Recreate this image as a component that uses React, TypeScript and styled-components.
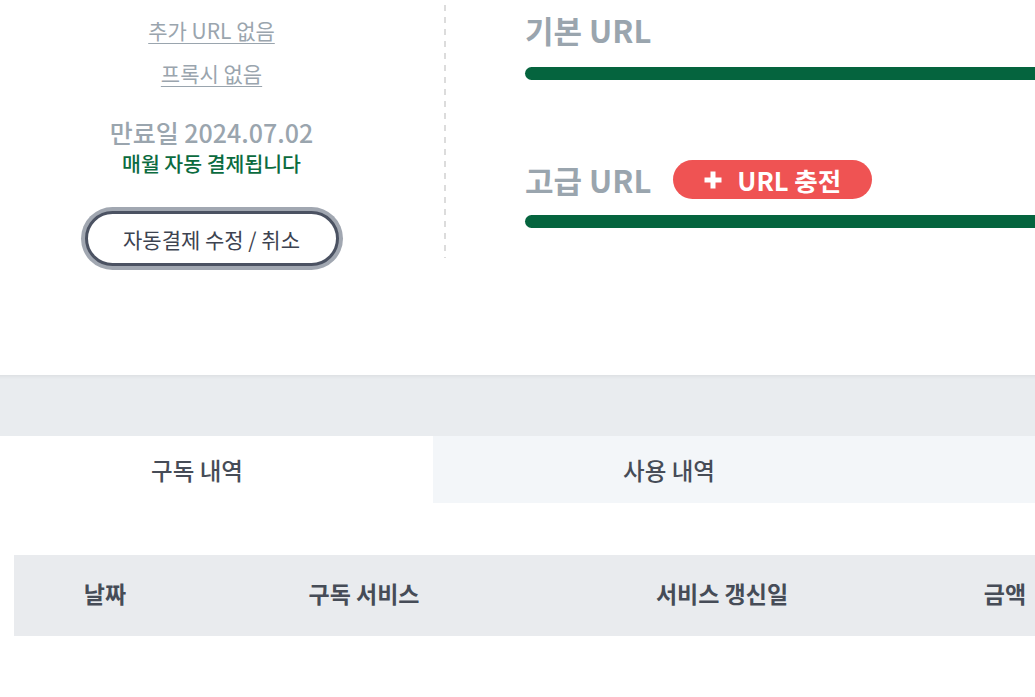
import React from 'react';
import styled, { createGlobalStyle } from 'styled-components';

const GlobalStyle = createGlobalStyle`
  html, body {
    margin: 0;
    padding: 0;
    background: #fff;
    overflow: hidden;
  }
  body {
    font-family: "Noto Sans CJK KR", "Noto Sans", sans-serif;
    color: #464c57;
  }
`;

// the screenshot is a crop of a wider page, shifted left a little
const Page = styled.div`
  margin-left: -39px;
  width: 1640px;
`;

const Summary = styled.section`
  display: flex;
  align-items: flex-start;
  height: 375px;
  padding: 5px 0 0 18px;
  box-sizing: border-box;
`;

const PlanCol = styled.div`
  width: 465px;
  display: flex;
  flex-direction: column;
  align-items: center;
`;

const Divider = styled.div`
  width: 2px;
  height: 253px;
  flex-shrink: 0;
  background: repeating-linear-gradient(
    to bottom,
    #dcdcdc 0,
    #dcdcdc 6px,
    transparent 6px,
    transparent 12px
  );
`;

const PlainLink = styled.a<{ $top: number }>`
  margin-top: ${(p) => p.$top}px;
  font-size: 21px;
  line-height: 30px;
  color: #9aa5ae;
  text-decoration: underline;
  text-underline-offset: 4px;
  text-decoration-thickness: 1px;
  cursor: pointer;
`;

const Expire = styled.div`
  margin-top: 29px;
  font-size: 25px;
  line-height: 30px;
  font-weight: 500;
  color: #9aa5ae;
`;

const AutoPay = styled.div`
  margin-top: 3px;
  font-size: 20.5px;
  line-height: 26px;
  font-weight: 500;
  color: #0b6b3f;
`;

const OutlineButton = styled.button`
  margin-top: 35px;
  width: 254px;
  height: 55px;
  border: 3px solid #4b5262;
  border-radius: 30px;
  box-shadow: 0 0 0 4px #a1a7b1;
  background: #fff;
  font-family: inherit;
  font-size: 21px;
  color: #3d4350;
  cursor: pointer;
`;

const UsageCol = styled.div`
  flex: 1;
  padding-left: 79px;
  margin-top: 5px;
`;

const UsageHead = styled.div<{ $top: number }>`
  display: flex;
  align-items: center;
  gap: 22px;
  margin-top: ${(p) => p.$top}px;
  height: ${(p) => (p.$top ? 39 : 40)}px;
`;

const UsageTitle = styled.h3`
  margin: 0;
  font-size: 31px;
  line-height: 40px;
  font-weight: 700;
  color: #9aa5ae;
`;

const ChargeButton = styled.button`
  display: flex;
  align-items: center;
  gap: 15px;
  height: 39px;
  padding: 0 31px;
  border: none;
  border-radius: 20px;
  background: #ef5353;
  color: #fff;
  font-family: inherit;
  font-size: 25.5px;
  font-weight: 700;
  cursor: pointer;
`;

const Bar = styled.div<{ $top: number }>`
  margin-top: ${(p) => p.$top}px;
  height: 13px;
  border-radius: 7px;
  background: #05643e;
`;

const Band = styled.div`
  height: 61px;
  background: #e9ecef;
  box-shadow: inset 0 3px 4px -2px rgba(0, 0, 0, 0.07);
`;

const Tabs = styled.div`
  display: grid;
  grid-template-columns: repeat(3, 472px);
`;

const Tab = styled.button<{ $active?: boolean }>`
  height: 67px;
  border: none;
  background: ${(p) => (p.$active ? '#fff' : '#f3f6f9')};
  font-family: inherit;
  font-size: 23.5px;
  font-weight: 500;
  color: #464c57;
  cursor: pointer;
`;

const TableWrap = styled.div`
  padding: 52px 0 0 53px;
`;

const HeadRow = styled.div`
  display: grid;
  grid-template-columns: 182px 336px 380px 186px 1fr;
  height: 81px;
  padding-bottom: 5px;
  box-sizing: border-box;
  align-items: center;
  background: #e9ebee;
`;

const HeadCell = styled.div`
  text-align: center;
  font-size: 23px;
  font-weight: 700;
  color: #464c57;
`;

const PlusIcon = () => (
  <svg width="18" height="18" viewBox="0 0 18 18">
    <path d="M9 0.5v17M0.5 9h17" stroke="#fff" strokeWidth="5" />
  </svg>
);

const App = () => {
  return (
    <>
      <GlobalStyle />
      <Page>
        <Summary>
          <PlanCol>
            <PlainLink $top={10}>추가 URL 없음</PlainLink>
            <PlainLink $top={13}>프록시 없음</PlainLink>
            <Expire>만료일 2024.07.02</Expire>
            <AutoPay>매월 자동 결제됩니다</AutoPay>
            <OutlineButton>자동결제 수정 / 취소</OutlineButton>
          </PlanCol>
          <Divider />
          <UsageCol>
            <UsageHead $top={0}>
              <UsageTitle>기본 URL</UsageTitle>
            </UsageHead>
            <Bar $top={17} />
            <UsageHead $top={80}>
              <UsageTitle>고급 URL</UsageTitle>
              <ChargeButton>
                <PlusIcon />
                URL 충전
              </ChargeButton>
            </UsageHead>
            <Bar $top={16} />
          </UsageCol>
        </Summary>
        <Band />
        <Tabs>
          <Tab $active>구독 내역</Tab>
          <Tab>사용 내역</Tab>
          <Tab />
        </Tabs>
        <TableWrap>
          <HeadRow>
            <HeadCell>날짜</HeadCell>
            <HeadCell>구독 서비스</HeadCell>
            <HeadCell>서비스 갱신일</HeadCell>
            <HeadCell>금액</HeadCell>
            <HeadCell />
          </HeadRow>
        </TableWrap>
      </Page>
    </>
  );
};

export default App;
